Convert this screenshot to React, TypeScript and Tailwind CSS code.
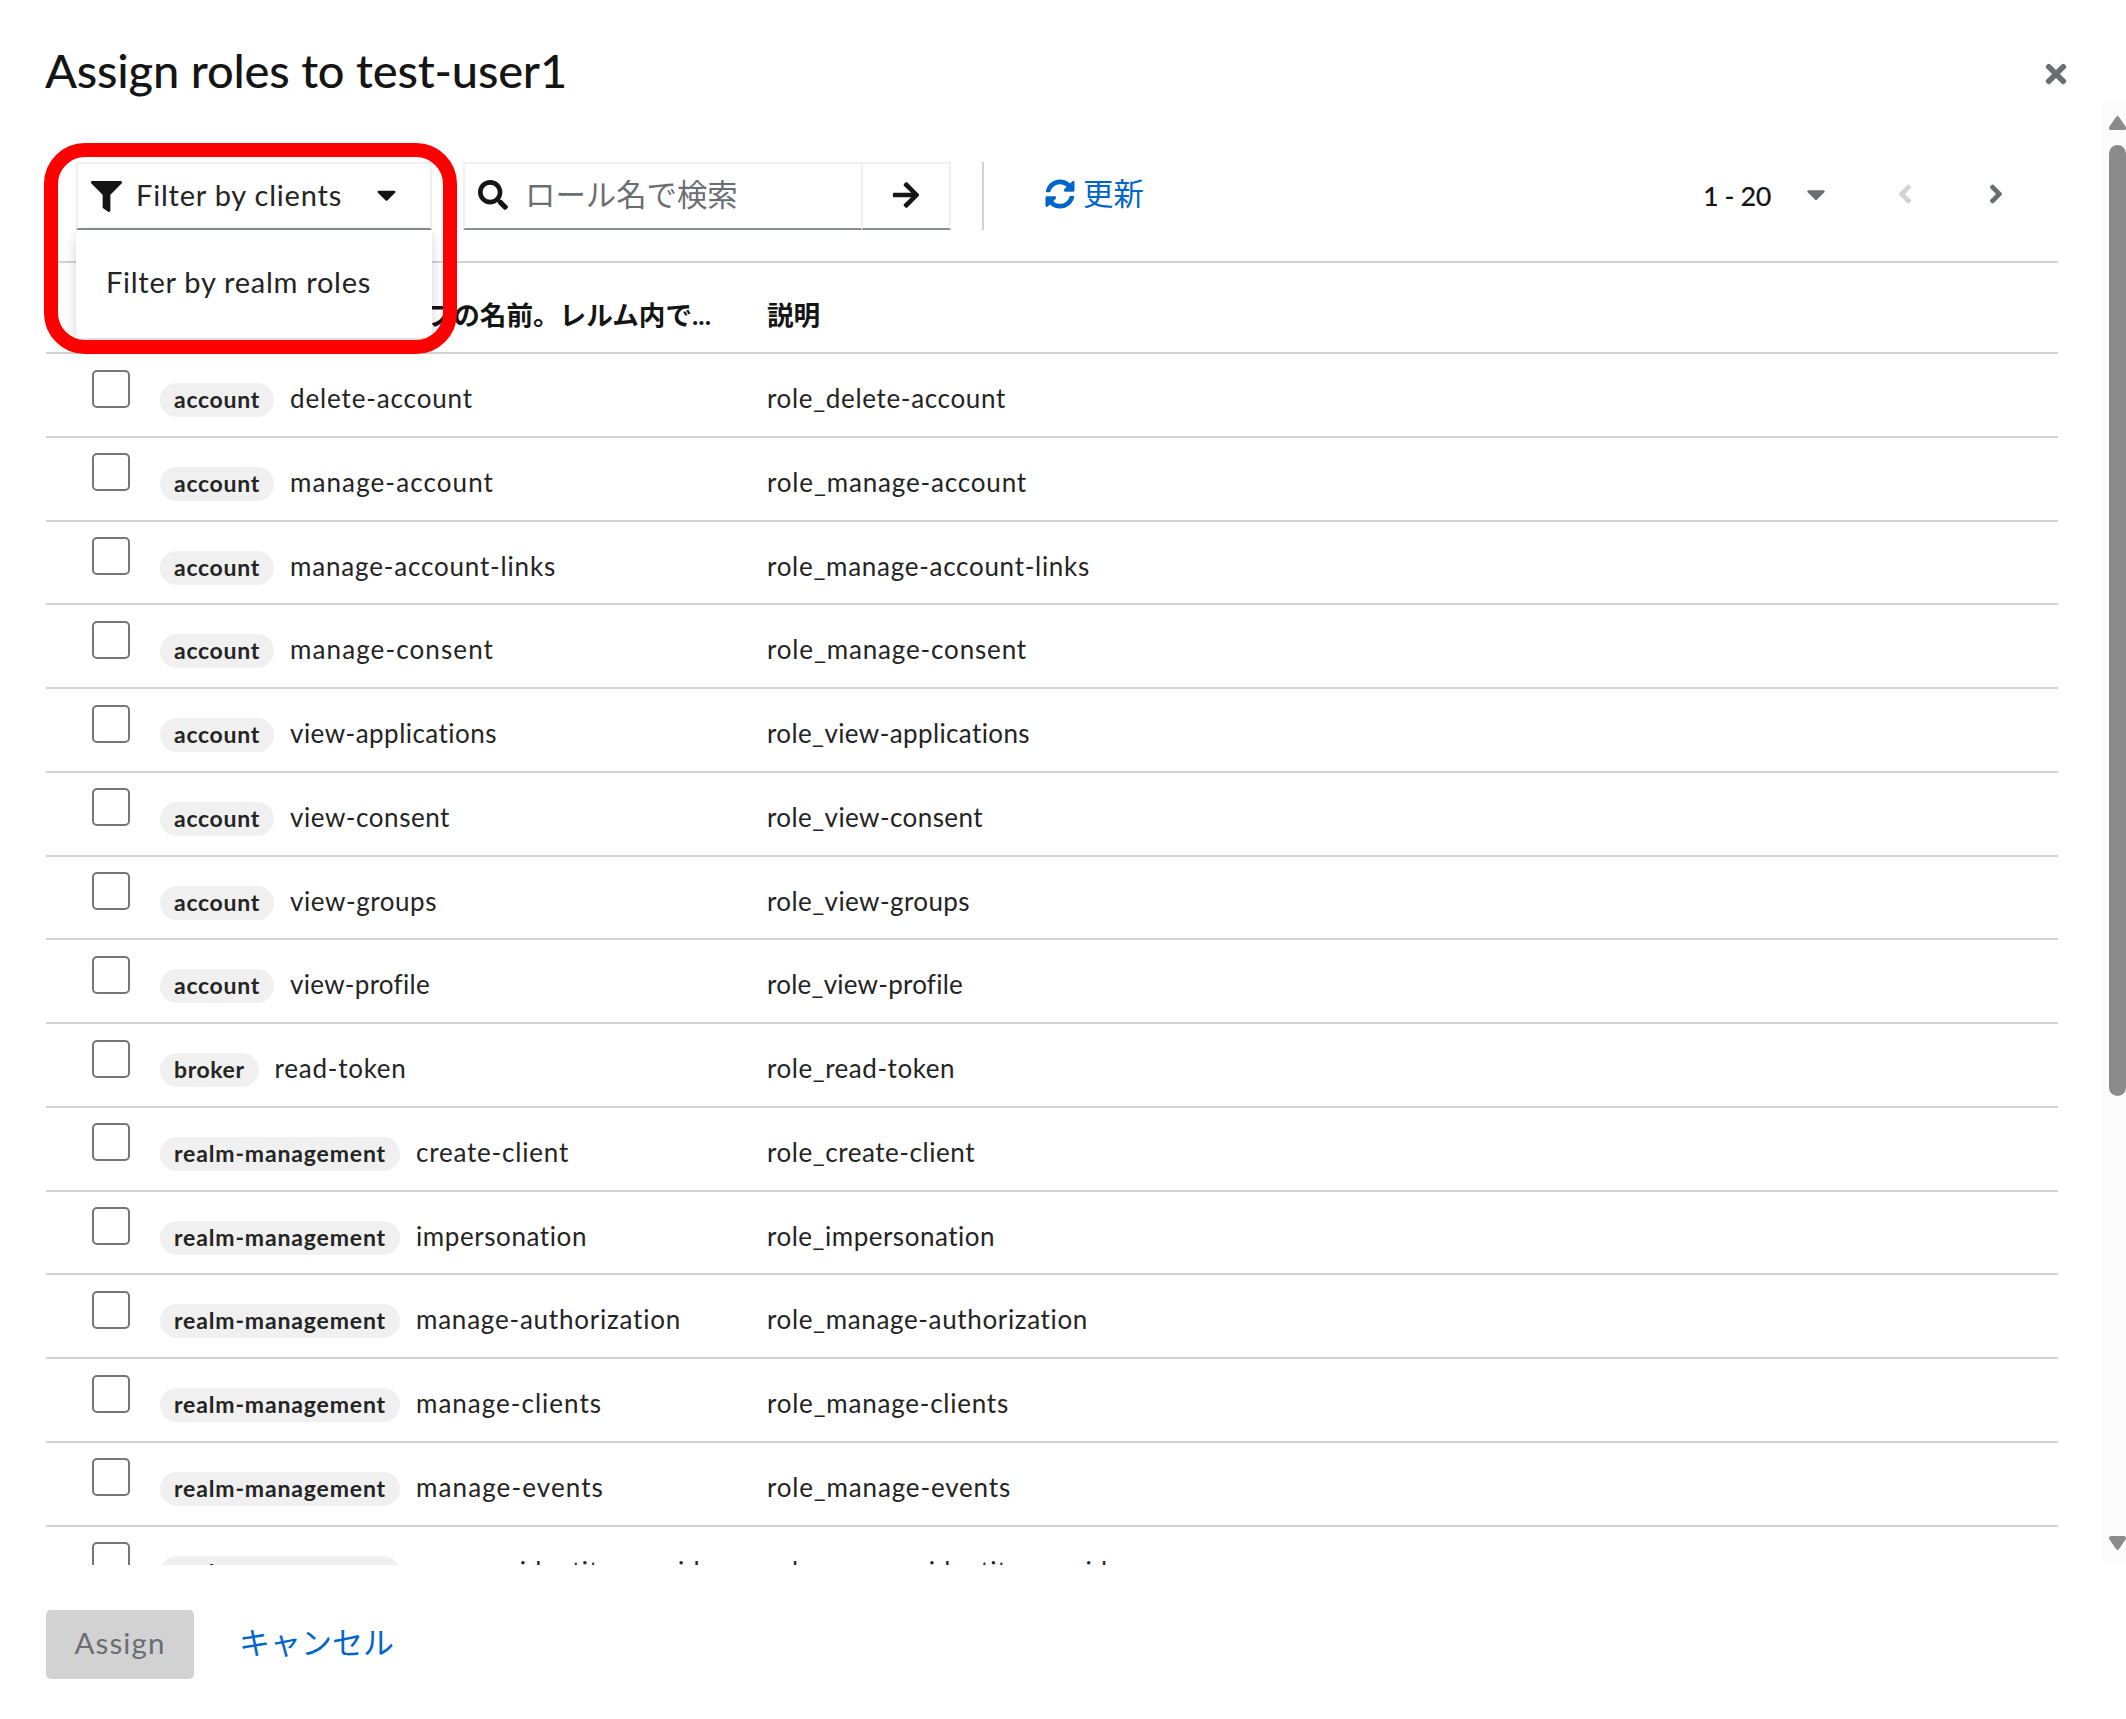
import { useLayoutEffect, useRef, useState } from "react";
import { FaAngleLeft, FaAngleRight, FaArrowRight, FaCaretDown, FaFilter, FaSearch, FaSyncAlt, FaTimes } from "react-icons/fa";

type Role = { client: string; name: string; nameWidth: number; descWidth: number };

const clientWidths: Record<string, number> = { account: 86, broker: 70.6, "realm-management": 212 };

const roles: Role[] = [
  { client: "account", name: "delete-account", nameWidth: 183, descWidth: 239 },
  { client: "account", name: "manage-account", nameWidth: 204, descWidth: 260 },
  { client: "account", name: "manage-account-links", nameWidth: 266, descWidth: 323 },
  { client: "account", name: "manage-consent", nameWidth: 204, descWidth: 260 },
  { client: "account", name: "view-applications", nameWidth: 207, descWidth: 263 },
  { client: "account", name: "view-consent", nameWidth: 160, descWidth: 216 },
  { client: "account", name: "view-groups", nameWidth: 147, descWidth: 203 },
  { client: "account", name: "view-profile", nameWidth: 140, descWidth: 196 },
  { client: "broker", name: "read-token", nameWidth: 132, descWidth: 188 },
  { client: "realm-management", name: "create-client", nameWidth: 153, descWidth: 208 },
  { client: "realm-management", name: "impersonation", nameWidth: 171, descWidth: 228 },
  { client: "realm-management", name: "manage-authorization", nameWidth: 265, descWidth: 321 },
  { client: "realm-management", name: "manage-clients", nameWidth: 186, descWidth: 242 },
  { client: "realm-management", name: "manage-events", nameWidth: 188, descWidth: 244 },
  { client: "realm-management", name: "manage-identity-providers", nameWidth: 321, descWidth: 377 },
];

/** Text whose letter spacing is tuned so that it takes exactly the given width. */
function Fitted({ text, width }: { text: string; width: number }) {
  const ref = useRef<HTMLSpanElement>(null);
  const [spacing, setSpacing] = useState(0);
  useLayoutEffect(() => {
    if (!ref.current) return;
    const natural = ref.current.getBoundingClientRect().width - spacing * text.length;
    const next = (width - natural) / text.length;
    if (Math.abs(next - spacing) > 0.01) setSpacing(next);
  }, [text, width, spacing]);
  return (
    <span ref={ref} className="inline-block whitespace-nowrap" style={{ letterSpacing: spacing }}>
      {text}
    </span>
  );
}

function RoleRow({ client, name, nameWidth, descWidth }: Role) {
  return (
    <div className="flex h-[83.77px] shrink-0 items-start border-b-2 border-[#d2d2d2] text-[26px] leading-[40px] text-[#242424]">
      <span className="mt-[15.500px] ml-[45.500px] size-[38px] shrink-0 rounded-[5px] border-2 border-[#767676] bg-white" />
      <div className="ml-[30.500px] flex w-[607px] shrink-0 items-start">
        <span className="mt-[29px] flex h-[34px] items-center rounded-full bg-[#f0f0f0] px-[14px] pb-[2px] text-[23px] leading-[32px] font-bold">
          <Fitted text={client} width={clientWidths[client]} />
        </span>
        <span className="mt-6 ml-4">
          <Fitted text={name} width={nameWidth} />
        </span>
      </div>
      <span className="mt-6">
        <Fitted text={`role_${name}`} width={descWidth} />
      </span>
    </div>
  );
}

function Toolbar() {
  return (
    <div className="flex h-[68px] shrink-0 items-stretch pl-[30px] text-[29px]">
      <div className="relative w-[356px] text-[#242424]">
        <button className="flex h-full w-full items-center border-2 border-[#f0f0f0] border-b-[#8a8d90] pl-[13px]">
          <FaFilter className="size-[31px] text-[#151515]" />
          <span className="ml-[14px] w-[235px] pb-[3px] text-left">
            <Fitted text="Filter by clients" width={206} />
          </span>
          <FaCaretDown className="mb-[3px] size-[31px] text-[#151515]" />
        </button>
        <div className="absolute top-[68px] left-0 z-10 flex h-[108px] w-[356px] items-center bg-white pb-[4px] pl-[30px] shadow-[0_8px_16px_0_rgba(3,3,3,0.12),0_0_8px_0_rgba(3,3,3,0.06)]">
          <Fitted text="Filter by realm roles" width={265} />
        </div>
        <div className="pointer-events-none absolute -top-[19px] -left-[32px] z-20 h-[211px] w-[413px] rounded-[41px] border-[14px] border-[#ff0000]" />
      </div>
      <div className="ml-[31px] flex w-[398px] items-center border-2 border-r-0 border-[#f0f0f0] border-b-[#8a8d90] pb-[3px] pl-[13px]">
        <FaSearch className="size-[30px] text-[#151515]" />
        <span className="ml-[17px] text-[30.4px] text-[#6a6e73]">ロール名で検索</span>
      </div>
      <button className="flex w-[90px] items-center justify-center border-2 border-[#f0f0f0] border-b-[#8a8d90] pb-[3px]">
        <FaArrowRight className="size-[30px] text-[#151515]" />
      </button>
      <div className="ml-[31px] w-[2px] bg-[#d2d2d2]" />
      <button className="ml-[61px] flex items-center pb-1 text-[#0066cc]">
        <FaSyncAlt className="size-[30px]" />
        <span className="ml-2 text-[30.4px]">更新</span>
      </button>
      <div className="mr-[47px] ml-auto flex items-center pb-[4px] text-[#6a6e73]">
        <span className="w-[98px] pt-[4px] text-[27px] font-medium text-[#151515]">
          <Fitted text="1 - 20" width={68} />
        </span>
        <FaCaretDown className="size-[30px]" />
        <FaAngleLeft className="ml-[59px] size-[30px] text-[#d2d2d2]" />
        <FaAngleRight className="ml-[61px] size-[30px]" />
      </div>
    </div>
  );
}

export default function App() {
  return (
    <div className="flex h-[1719px] w-[2126px] flex-col overflow-hidden bg-white font-['Lato','Noto_Sans_CJK_JP',sans-serif] text-[#151515]">
      <header className="flex h-[101px] shrink-0 justify-between pl-[45px]">
        <h1 className="mt-[40px] text-[47px] leading-[60px] font-medium">
          <Fitted text="Assign roles to test-user1" width={522} />
        </h1>
        <FaTimes className="mt-[59px] mr-[55px] size-[30px] text-[#6a6e73]" />
      </header>
      <div className="flex h-[1464px] shrink-0">
        <main className="flex w-[2103px] flex-col overflow-hidden pt-[61px] pr-[45px] pl-[46px]">
          <Toolbar />
          <div className="mt-[31px] flex h-[93px] shrink-0 items-center border-y-2 border-[#d2d2d2] pt-[17px] text-[26.600px] font-bold">
            <div className="flex w-[665px] justify-end whitespace-nowrap">グループの名前。レルム内で...</div>
            <span className="ml-[56px]">説明</span>
          </div>
          {roles.map((role) => (
            <RoleRow key={role.name} {...role} />
          ))}
        </main>
        <div className="flex flex-1 flex-col items-end bg-[#fcfcfc] pt-[15px] pb-[15px]">
          <svg viewBox="0 0 17 14" className="h-[14px] w-[17px] fill-[#8b8b8b]">
            <path d="M7 1Q8.500-.8 10 1L16.500 10.500Q18 14 15 14H2Q-1 14 .5 10.500Z" />
          </svg>
          <div className="mt-[15px] h-[951px] w-[17px] rounded-full bg-[#8b8b8b]" />
          <svg viewBox="0 0 17 14" className="mt-auto h-[14px] w-[17px] fill-[#8b8b8b]">
            <path d="M7 13Q8.500 14.800 10 13L16.500 3.500Q18 0 15 0H2Q-1 0 .5 3.500Z" />
          </svg>
        </div>
      </div>
      <footer className="flex pt-[45px] pl-[46px] text-[29.5px]">
        <button className="flex h-[69px] w-[148px] items-center justify-center rounded-[5px] bg-[#d2d2d2] pb-[2px] text-[#6a6e73]">
          <Fitted text="Assign" width={91} />
        </button>
        <button className="ml-[45px] flex h-[69px] items-center pb-[4px] text-[31px] text-[#0066cc]">キャンセル</button>
      </footer>
    </div>
  );
}
